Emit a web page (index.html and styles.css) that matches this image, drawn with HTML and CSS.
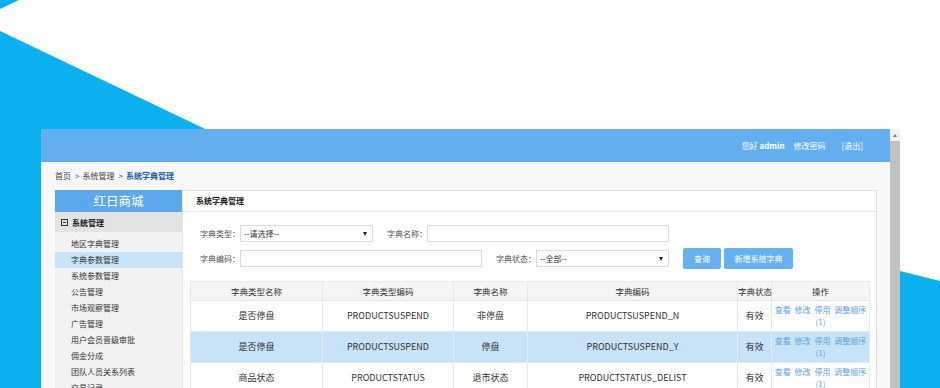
FILE: index.html
```html
<!DOCTYPE html>
<html lang="zh-CN">
<head>
  <meta charset="UTF-8" />
  <title>系统字典管理</title>
  <link rel="stylesheet" href="styles.css">
</head>
<body>
  <svg class="backdrop" width="940" height="388" viewBox="0 0 940 388">
    <polygon points="0,0 19,0 0,9" />
    <polygon points="0,31 747,388 0,388" />
    <polygon points="880,266 940,281 940,388 880,388" />
  </svg>

  <div class="window">
    <div class="page">
      <div class="topbar">
        <span>您好 <b>admin</b></span>
        <a class="pwd">修改密码</a>
        <a class="logout">[退出]</a>
      </div>

      <div class="crumbs">首页<span class="sep">&gt;</span>系统管理<span class="sep">&gt;</span><span class="current">系统字典管理</span></div>

      <div class="content">
        <div class="sidebar">
          <div class="brand">红日商城</div>
          <div class="group"><span class="fold"></span>系统管理</div>
          <ul class="menu">
            <li>地区字典管理</li>
            <li class="active">字典参数管理</li>
            <li>系统参数管理</li>
            <li>公告管理</li>
            <li>市场观察管理</li>
            <li>广告管理</li>
            <li>用户会员晋级审批</li>
            <li>佣金分成</li>
            <li>团队人员关系列表</li>
            <li>交易记录</li>
          </ul>
        </div>

        <div class="panel">
          <div class="panel-title">系统字典管理</div>

          <div class="search">
            <div class="row">
              <label>字典类型：</label>
              <div class="select narrow"><span>--请选择--</span><i></i></div>
              <label class="gap">字典名称：</label>
              <input class="wide" type="text">
            </div>
            <div class="row">
              <label>字典编码：</label>
              <input class="wide" type="text">
              <label class="gap">字典状态：</label>
              <div class="select narrow"><span>--全部--</span><i></i></div>
              <button class="btn query">查询</button>
              <button class="btn add">新增系统字典</button>
            </div>
          </div>

          <table class="grid">
            <colgroup>
              <col style="width:132px">
              <col style="width:131px">
              <col style="width:74px">
              <col style="width:210px">
              <col style="width:34px">
              <col style="width:98px">
            </colgroup>
            <thead>
              <tr>
                <th>字典类型名称</th>
                <th>字典类型编码</th>
                <th>字典名称</th>
                <th>字典编码</th>
                <th>字典状态</th>
                <th>操作</th>
              </tr>
            </thead>
            <tbody>
              <tr>
                <td>是否停盘</td>
                <td>PRODUCTSUSPEND</td>
                <td>非停盘</td>
                <td>PRODUCTSUSPEND_N</td>
                <td>有效</td>
                <td class="ops"><a>查看</a> <a>修改</a> <a>停用</a> <a>调整顺序</a><br><a>(1)</a></td>
              </tr>
              <tr class="selected">
                <td>是否停盘</td>
                <td>PRODUCTSUSPEND</td>
                <td>停盘</td>
                <td>PRODUCTSUSPEND_Y</td>
                <td>有效</td>
                <td class="ops"><a>查看</a> <a>修改</a> <a>停用</a> <a>调整顺序</a><br><a>(1)</a></td>
              </tr>
              <tr>
                <td>商品状态</td>
                <td>PRODUCTSTATUS</td>
                <td>退市状态</td>
                <td>PRODUCTSTATUS_DELIST</td>
                <td>有效</td>
                <td class="ops"><a>查看</a> <a>修改</a> <a>停用</a> <a>调整顺序</a><br><a>(1)</a></td>
              </tr>
            </tbody>
          </table>
        </div>
      </div>
    </div>

    <div class="scrollbar">
      <div class="scroll-up"><i></i></div>
    </div>
  </div>
</body>
</html>
```

FILE: styles.css
```css
body {
  margin: 0;
  width: 940px;
  height: 388px;
  overflow: hidden;
  position: relative;
  background: #fff;
  font-family: "Noto Sans CJK SC", "Noto Sans", sans-serif;
  font-size: 8px;
  color: #333;
}
.backdrop {
  position: absolute;
  left: 0;
  top: 0;
  fill: #0bb0ef;
}
.window {
  position: relative;
  display: flex;
  width: 859px;
  height: 259px;
  margin: 129px 0 0 41px;
  overflow: hidden;
}
.page {
  width: 849px;
  background: #f8f8f8;
}
.topbar {
  height: 33px;
  background: #63aeee;
  display: flex;
  justify-content: flex-end;
  align-items: center;
  padding-right: 27px;
  color: #fff;
}
.topbar b {
  font-weight: bold;
}
.topbar .pwd {
  margin-left: 9px;
}
.topbar .logout {
  margin-left: 16px;
}
.crumbs {
  height: 28px;
  line-height: 28px;
  padding-left: 14px;
  color: #444;
}
.crumbs .sep {
  margin: 0 3px 0 4px;
}
.crumbs .current {
  color: #2264b0;
  font-weight: bold;
}
.content {
  display: flex;
  height: 198px;
  padding: 0 13px 0 14px;
}
.sidebar {
  width: 127px;
  background: #f2f2f2;
}
.brand {
  height: 22px;
  line-height: 22px;
  background: #5ca8ec;
  color: #fff;
  text-align: center;
  font-size: 12.5px;
}
.group {
  height: 20px;
  display: flex;
  align-items: center;
  padding-left: 6px;
  background: #e3e3e3;
  font-weight: bold;
  color: #222;
}
.fold {
  width: 5px;
  height: 5px;
  border: 1px solid #333;
  margin-right: 4px;
  position: relative;
}
.fold::after {
  content: "";
  position: absolute;
  left: 1px;
  top: 2px;
  width: 3px;
  height: 1px;
  background: #333;
}
.menu {
  list-style: none;
  margin: 0;
  padding: 4px 0 0;
}
.menu li {
  height: 16px;
  line-height: 16px;
  padding-left: 16px;
}
.menu li.active {
  background: #c9e3f9;
}
.panel {
  flex: 1;
  background: #fff;
  border: 1px solid #e3e3e3;
  border-bottom: none;
}
.panel-title {
  height: 20px;
  line-height: 20px;
  padding-left: 13px;
  border-bottom: 1px solid #e6e6e6;
  font-weight: bold;
  color: #222;
}
.search {
  padding: 11px 0 0 17px;
}
.row {
  display: flex;
  align-items: center;
  height: 21px;
  margin-bottom: 4px;
}
.row label {
  width: 40px;
  color: #555;
}
.row label.gap {
  margin-left: 14px;
}
.select, .row input {
  box-sizing: border-box;
  height: 17px;
  border: 1px solid #dcdcdc;
  background: #fff;
}
.row input {
  margin: 0;
  padding: 0;
}
.select {
  display: flex;
  align-items: center;
  justify-content: space-between;
  padding: 0 5px 0 3px;
  color: #333;
}
.select i {
  width: 0;
  height: 0;
  border-left: 2px solid transparent;
  border-right: 2px solid transparent;
  border-top: 4px solid #222;
}
.narrow {
  width: 133px;
}
.wide {
  width: 242px;
}
.btn {
  height: 21px;
  border: none;
  border-radius: 2px;
  background: #67b1ef;
  color: #fff;
  font-family: inherit;
  font-size: 8px;
  padding: 0;
}
.query {
  width: 38px;
  margin-left: 14px;
}
.add {
  width: 69px;
  margin-left: 3px;
}
.grid {
  margin: 12px 0 0 7px;
  width: 679px;
  table-layout: fixed;
  border-collapse: collapse;
}
.grid th, .grid td {
  border: 1px solid #e8e8e8;
  padding: 3px 0;
  line-height: 12px;
  text-align: center;
  white-space: nowrap;
}
.grid th {
  background: #f5f5f5;
  font-weight: normal;
  font-size: 8.5px;
  color: #333;
}
.grid td {
  font-size: 9px;
  color: #333;
}
.grid tr.selected td {
  background: #c8e2f8;
}
.grid td.ops {
  font-size: 8px;
}
.ops a {
  color: #5aa5e8;
  margin: 0 1px;
}
.scrollbar {
  width: 10px;
  background: #c1c1c1;
}
.scroll-up {
  height: 12px;
  background: #f1f1f1;
  display: flex;
  justify-content: center;
  align-items: center;
}
.scroll-up i {
  width: 0;
  height: 0;
  border-left: 2px solid transparent;
  border-right: 2px solid transparent;
  border-bottom: 3px solid #777;
}
```
